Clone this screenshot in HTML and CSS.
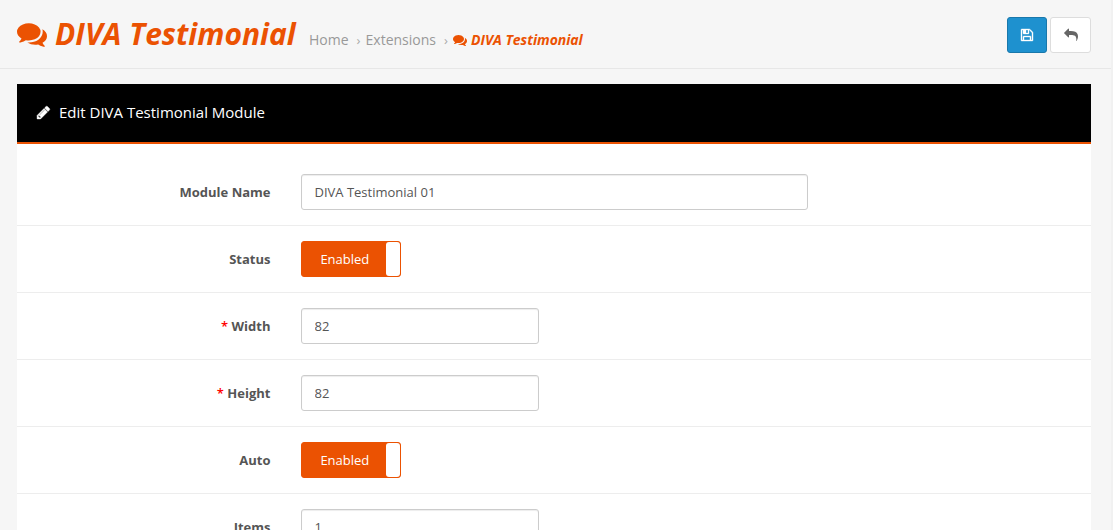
FILE: index.html
```
<!DOCTYPE html>
<html lang="en">
<head>
<meta charset="utf-8">
<title>DIVA Testimonial</title>
<link rel="stylesheet" href="styles.css">
</head>
<body>
<svg class="defs" aria-hidden="true">
  <symbol id="comments" viewBox="0 0 1792 1792"><path d="M1408 768q0 139-94 257t-256.500 186.500-353.500 68.500q-86 0-176-16-124 88-278 128-36 9-86 16h-3q-11 0-20.500-8t-11.500-21q-1-3-1-6.500t.5-6.500 2-6l2.500-5 3.500-5.500 4-5 4.500-5 4-4.500q5-6 23-25t26-29.500 22.500-29 25-38.500 20.500-44q-124-72-195-177t-71-224q0-139 94-257t256.500-186.500 353.500-68.500 353.500 68.500 256.500 186.500 94 257zm384 256q0 120-71 224.500t-195 176.500q10 24 20.500 44t25 38.500 22.500 29 26 29.500 23 25q1 1 4 4.500t4.500 5 4 5 3.500 5.500l2.500 5 2 6 .5 6.500-1 6.500q-3 14-13 22t-22 7q-50-7-86-16-154-40-278-128-90 16-176 16-271 0-472-132 58 4 88 4 161 0 309-45t264-129q125-92 192-212t67-254q0-77-23-152 129 71 204 178t75 230z"/></symbol>
</svg>
<header class="page-header">
  <div class="heading">
    <h1><svg class="title-icon"><use href="#comments"/></svg><span>DIVA Testimonial</span></h1>
    <nav class="breadcrumb">
      <a>Home</a><span class="sep">›</span><a>Extensions</a><span class="sep">›</span><svg class="crumb-icon"><use href="#comments"/></svg><a class="current">DIVA Testimonial</a>
    </nav>
  </div>
  <div class="actions">
    <button class="btn save" aria-label="Save"><svg viewBox="0 0 1792 1792"><path d="M512 1536h768v-384h-768v384zm896 0h128v-896q0-14-10-38.500t-20-34.500l-281-281q-10-10-34-20t-39-10v416q0 40-28 68t-68 28h-576q-40 0-68-28t-28-68v-416h-128v1280h128v-416q0-40 28-68t68-28h832q40 0 68 28t28 68v416zm-384-928v-320q0-13-9.500-22.500t-22.500-9.500h-192q-13 0-22.500 9.500t-9.500 22.500v320q0 13 9.500 22.500t22.500 9.500h192q13 0 22.500-9.500t9.500-22.500zm640 32v928q0 40-28 68t-68 28h-1344q-40 0-68-28t-28-68v-1344q0-40 28-68t68-28h928q40 0 88 20t76 48l280 280q28 28 48 76t20 88z"/></svg></button>
    <button class="btn back" aria-label="Back"><svg viewBox="0 0 1792 1792"><path d="M1792 1120q0 166-127 451-3 7-10.500 24t-13.500 30-13 22q-12 17-28 17-15 0-23.500-10t-8.500-25q0-9 2.500-26.500t2.500-23.500q5-68 5-123 0-101-17.500-181t-48.500-138.500-80-101-105.500-69.500-133-42.500-154-21.500-175.500-6h-224v256q0 26-19 45t-45 19-45-19l-512-512q-19-19-19-45t19-45l512-512q19-19 45-19t45 19 19 45v256h224q713 0 875 403 53 134 53 333z"/></svg></button>
  </div>
</header>
<main class="panel">
  <div class="panel-heading">
    <svg viewBox="0 0 1792 1792"><path d="M491 1536l91-91-235-235-91 91v107h128v128h107zm523-928q0-22-22-22-10 0-17 7l-542 542q-7 7-7 17 0 22 22 22 10 0 17-7l542-542q7-7 7-17zm-54-192l416 416-832 832h-416v-416zm683 96q0 53-37 90l-166 166-416-416 166-165q36-38 90-38 53 0 91 38l235 234q37 39 37 91z"/></svg>
    <h2>Edit DIVA Testimonial Module</h2>
  </div>
  <form class="form">
    <div class="row"><label>Module Name</label><input class="wide" value="DIVA Testimonial 01"></div>
    <div class="row"><label>Status</label><div class="switch"><span>Enabled</span><i></i></div></div>
    <div class="row"><label><b>*</b> Width</label><input value="82"></div>
    <div class="row"><label><b>*</b> Height</label><input value="82"></div>
    <div class="row"><label>Auto</label><div class="switch"><span>Enabled</span><i></i></div></div>
    <div class="row"><label>Items</label><input value="1"></div>
  </form>
</main>
</body>
</html>
```
FILE: styles.css
```
* { box-sizing: border-box; }
html { overflow: hidden; }
body {
  margin: 0;
  height: 530px;
  overflow: hidden;
  background: #f6f6f6;
  border-right: 2px solid #f1f1f1;
  color: #555;
  font: 13px/20px "Open Sans", sans-serif;
}
.defs { display: none; }
svg { fill: currentColor; flex: none; }
.page-header {
  display: flex;
  justify-content: space-between;
  height: 69px;
  padding: 17px 20px 0 17px;
  border-bottom: 1px solid #e7e7e7;
}
.heading { display: flex; }
h1 {
  display: flex;
  margin: 0;
  width: 292px;
  color: #eb5202;
  font-size: 30px;
  font-weight: 700;
  font-style: italic;
  line-height: 33px;
  white-space: nowrap;
}
.title-icon { width: 30px; height: 30px; margin: 2px 8px 0 0; }
.breadcrumb {
  display: flex;
  height: 20px;
  margin-top: 13px;
  color: #999;
  font-size: 14px;
  white-space: nowrap;
}
.sep { width: 17px; padding-left: 8px; color: #aaa; font-size: 13px; line-height: 20px; }
.crumb-icon { width: 14px; height: 14px; margin: 3px 4px 0 0; color: #eb5202; }
.current { color: #eb5202; font-weight: 700; font-style: italic; letter-spacing: -.04px; }
.actions { display: flex; gap: 3px; }
.btn {
  display: flex;
  align-items: center;
  justify-content: center;
  height: 36px;
  padding: 0;
  border: 1px solid #ddd;
  border-radius: 3px;
  background: #fff;
  color: #666;
}
.btn svg { width: 14px; height: 14px; }
.save { width: 40px; background: #1e91cf; border-color: #1978ab; color: #fff; }
.save svg { stroke: #fff; stroke-width: 50px; }
.back { width: 41px; }
.panel { margin: 15px 20px 0 17px; background: #fff; }
.panel-heading {
  display: flex;
  align-items: center;
  height: 60px;
  padding: 0 20px 2px 19px;
  border-bottom: 2px solid #eb5202;
  background: #000;
  color: #fff;
}
.panel-heading svg { width: 15px; height: 15px; margin-right: 8px; stroke: #fff; stroke-width: 50px; }
h2 { margin: 0; font-size: 15px; font-weight: 400; }
.form { padding-top: 15px; }
.row {
  display: grid;
  grid-template-columns: 253.5px 1fr;
  column-gap: 30.5px;
  align-items: center;
  height: 67px;
  border-bottom: 1px solid #ededed;
}
label { text-align: right; font-weight: 700; }
label b { color: #f00; font-weight: 600; }
input {
  width: 238px;
  height: 36px;
  padding: 0 12.5px;
  border: 1px solid #ccc;
  border-radius: 3px;
  box-shadow: inset 0 1px 1px rgba(0, 0, 0, .075);
  background: #fff;
  color: #555;
  font: inherit;
}
.wide { width: 507px; }
.switch {
  display: flex;
  width: 100px;
  height: 36px;
  border: 1px solid #eb5202;
  border-radius: 3px;
  background: #eb5202;
  color: #fff;
}
.switch span { width: 84px; padding-left: 18.4px; line-height: 35px; }
.switch i { width: 14px; border-radius: 3px; background: #fff; }
```
